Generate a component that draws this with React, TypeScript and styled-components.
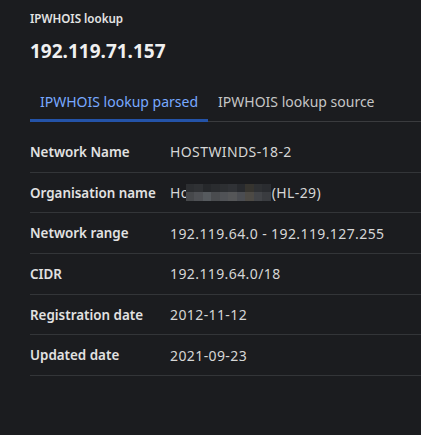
import styled, { createGlobalStyle } from 'styled-components';

const GlobalStyle = createGlobalStyle`
  html, body {
    margin: 0;
    padding: 0;
    background: #1b1c1f;
  }
  body {
    font-family: "Noto Sans", "DejaVu Sans", sans-serif;
    color: #e0e0e0;
  }
`

const Page = styled.div`
  padding: 10px 0 0 30px;
  min-height: 435px;
  box-sizing: border-box;
`

const Caption = styled.div`
  font-size: 11.6px;
  font-weight: 600;
  color: #e4e4e4;
  line-height: 18px;
`

const Heading = styled.h1`
  margin: 11px 0 0;
  font-size: 19px;
  font-weight: 700;
  line-height: 24px;
  color: #f0f0f0;
`

const TabBar = styled.div`
  display: flex;
  margin-top: 30px;
  border-bottom: 1px solid #3a3b3e;
`

const Tab = styled.div<{ active?: boolean }>`
  padding: 0 10px 11px;
  font-size: 14px;
  line-height: 18px;
  color: ${p => p.active ? '#78a9ff' : '#c6c6c6'};
  box-shadow: ${p => p.active ? 'inset 0 -3px 0 #2453a8' : 'none'};
  margin-bottom: -1px;
`

const Table = styled.div`
  margin-top: 10px;
`

const Row = styled.div`
  display: grid;
  grid-template-columns: 140px 1fr;
  align-items: center;
  height: 39.7px;
  border-bottom: 1px solid #333538;
  font-size: 14px;
`

const Label = styled.div`
  font-weight: 600;
  font-size: 13.4px;
  color: #e2e2e2;
`

const Value = styled.div`
  color: #d6d6d6;
  letter-spacing: 0.4px;
  display: flex;
  align-items: center;
`

const Mosaic = styled.span`
  display: inline-grid;
  grid-template-columns: repeat(10, 8.5px);
  grid-template-rows: 8px 9px;
  margin: 0 1px 0 -4px;
`

const Pixel = styled.span<{ shade: string }>`
  background: ${p => p.shade};
`

const topShades = ['#2c2e31', '#2f3134', '#26282b', '#2a2c2f', '#2d2f32', '#303236', '#282a2e', '#36342f', '#2e3033', '#2a2c30']
const bottomShades = ['#46484b', '#4e5054', '#565a5e', '#4a4c4f', '#505256', '#555658', '#4b4d52', '#4d4a45', '#424448', '#3a3c40']

const BlurredName = () => (
  <>
    Ho
    <Mosaic>
      {topShades.map((s, i) => <Pixel key={'t' + i} shade={s} />)}
      {bottomShades.map((s, i) => <Pixel key={'b' + i} shade={s} />)}
    </Mosaic>
    (HL-29)
  </>
)

const rows: [string, React.ReactNode][] = [
  ['Network Name', 'HOSTWINDS-18-2'],
  ['Organisation name', <BlurredName />],
  ['Network range', '192.119.64.0 - 192.119.127.255'],
  ['CIDR', '192.119.64.0/18'],
  ['Registration date', '2012-11-12'],
  ['Updated date', '2021-09-23'],
]

export default function App() {
  return (
    <>
      <GlobalStyle />
      <Page>
        <Caption>IPWHOIS lookup</Caption>
        <Heading>192.119.71.157</Heading>
        <TabBar>
          <Tab active>IPWHOIS lookup parsed</Tab>
          <Tab>IPWHOIS lookup source</Tab>
        </TabBar>
        <Table>
          {rows.map(([label, value]) => (
            <Row key={label}>
              <Label>{label}</Label>
              <Value>{value}</Value>
            </Row>
          ))}
        </Table>
      </Page>
    </>
  )
}
